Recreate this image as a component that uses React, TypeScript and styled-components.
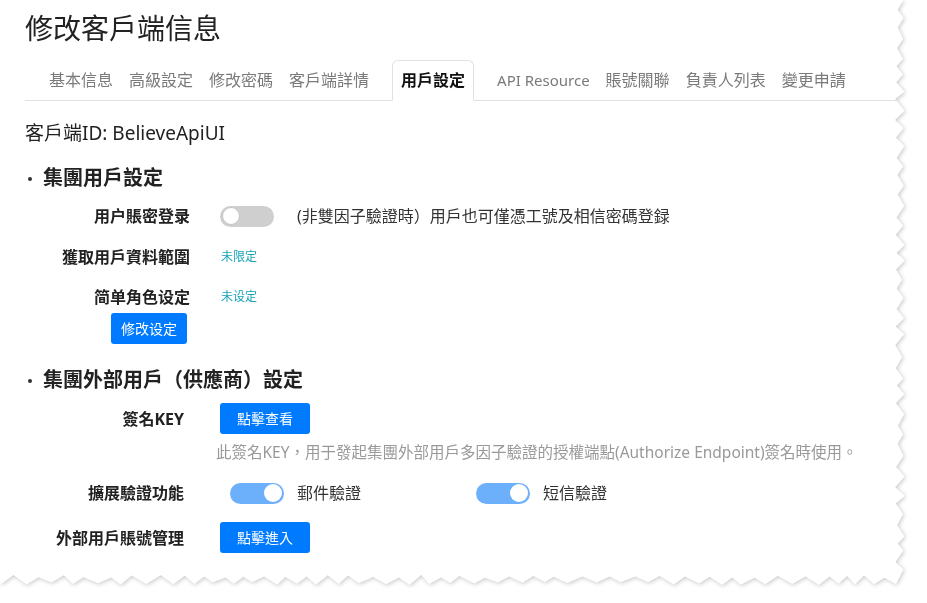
import { FunctionComponent } from "react";
import styled, { createGlobalStyle, css } from "styled-components";

const PAPER_W = 906;
const PAPER_H = 586;

// torn paper edge along the right and bottom sides
const buildTear = () => {
  let seed = 7;
  const rnd = () => {
    seed = (seed * 9301 + 49297) % 233280;
    return seed / 233280;
  };
  const pts: string[] = ["0px 0px"];
  for (let y = 0, i = 0; y < PAPER_H - 10; y += 7 + rnd() * 5, i++) {
    const x = i % 2 ? PAPER_W - 8 - rnd() * 3 : PAPER_W - 1 - rnd() * 3;
    pts.push(`${x.toFixed(1)}px ${y.toFixed(1)}px`);
  }
  for (let x = PAPER_W - 10, i = 0; x > 0; x -= 8 + rnd() * 7, i++) {
    const y = i % 2 ? PAPER_H - 8 - rnd() * 3 : PAPER_H - 1 - rnd() * 3;
    pts.push(`${x.toFixed(1)}px ${y.toFixed(1)}px`);
  }
  pts.push(`0px ${PAPER_H - 4}px`);
  return `polygon(${pts.join(", ")})`;
};

const TEAR = buildTear();

const GlobalStyle = createGlobalStyle`
  body {
    margin: 0;
    background: #ffffff;
    font-family: "Noto Sans", "Noto Sans CJK TC", sans-serif;
    color: #222;
  }
`;

const Page = styled.div`
  width: 927px;
  height: 603px;
  background: #ffffff;
  overflow: hidden;
`;
const Sheet = styled.div`
  width: ${PAPER_W}px;
  filter: drop-shadow(1px 1px 2px rgba(0, 0, 0, 0.22));
`;
const Paper = styled.div`
  width: ${PAPER_W}px;
  height: ${PAPER_H}px;
  background: #ffffff;
  clip-path: ${TEAR};
  padding: 10px 0 0 25px;
  box-sizing: border-box;
  display: flex;
  flex-direction: column;
  align-items: flex-start;
`;
const Title = styled.h1`
  margin: 0;
  font-size: 28px;
  line-height: 36px;
  font-weight: 400;
  color: #222;
`;
const TabBar = styled.nav`
  align-self: stretch;
  margin-top: 14px;
  height: 40px;
  display: flex;
  align-items: flex-end;
  padding-left: 16px;
  border-bottom: 1px solid #dee2e6;
`;
const Tab = styled.div<{ $active?: boolean; $latin?: boolean }>`
  height: 40px;
  line-height: 40px;
  padding: 0 8px;
  font-size: ${({ $latin }) => ($latin ? "15px" : "16px")};
  color: #7a7a7a;
  white-space: nowrap;
  ${({ $active }) =>
    $active &&
    css`
      height: 41px;
      box-sizing: border-box;
      margin: 0 15px -1px;
      line-height: 39px;
      border: 1px solid #dee2e6;
      border-bottom-color: #ffffff;
      border-radius: 6px 6px 0 0;
      background: #ffffff;
      color: #111;
      font-weight: 600;
    `}
`;
const ClientId = styled.div`
  margin-top: 20px;
  font-size: 19px;
  line-height: 24px;
  color: #222;
`;
const Heading = styled.h2<{ $top: number }>`
  margin: ${({ $top }) => $top}px 0 0;
  display: flex;
  align-items: center;
  font-size: 20px;
  line-height: 24px;
  font-weight: 700;
  color: #222;
`;
const Bullet = styled.span`
  width: 4px;
  height: 4px;
  border-radius: 50%;
  background: #333;
  margin: 2px 11px 0 3px;
`;
const Row = styled.div<{ $top: number; $labelWidth: number; $gap: number }>`
  margin-top: ${({ $top }) => $top}px;
  min-height: 24px;
  display: flex;
  align-items: center;
  gap: ${({ $gap }) => $gap}px;

  & > label {
    width: ${({ $labelWidth }) => $labelWidth}px;
  }
`;
const Label = styled.label`
  flex-shrink: 0;
  text-align: right;
  font-size: 16px;
  line-height: 24px;
  font-weight: 700;
  color: #222;
`;
const Text = styled.span`
  font-size: 16px;
  line-height: 24px;
  color: #333;
  white-space: nowrap;
`;
const Hint = styled.span`
  font-size: 12px;
  line-height: 24px;
  color: #17a2b8;
`;
const Button = styled.button<{ $pad: number; $top?: number; $left?: number }>`
  margin: ${({ $top = 0 }) => $top}px 0 0 ${({ $left = 0 }) => $left}px;
  height: 31px;
  padding: 0 ${({ $pad }) => $pad}px;
  border: none;
  border-radius: 3px;
  background: #007bff;
  color: #ffffff;
  font-family: inherit;
  font-size: 14px;
  line-height: 31px;
  cursor: pointer;
`;
const HelpText = styled.div`
  margin: 8px 0 0 191px;
  font-size: 15.5px;
  line-height: 20px;
  color: #999;
  white-space: nowrap;
`;
const Switch = styled.span<{ $on?: boolean }>`
  position: relative;
  display: inline-block;
  flex-shrink: 0;
  width: 54px;
  height: 21px;
  border-radius: 11px;
  background: ${({ $on }) => ($on ? "#6cb0fc" : "#cfcfcf")};

  &::after {
    content: "";
    position: absolute;
    top: 1.5px;
    left: ${({ $on }) => ($on ? "34px" : "2px")};
    width: 18px;
    height: 18px;
    box-sizing: border-box;
    border-radius: 50%;
    background: #ffffff;
    border: ${({ $on }) => ($on ? "none" : "1px solid #c4c4c4")};
  }
`;
const SwitchGroup = styled.div<{ $width?: number; $gap?: number }>`
  display: flex;
  align-items: center;
  gap: ${({ $gap = 13 }) => $gap}px;
  width: ${({ $width }) => ($width ? `${$width}px` : "auto")};
`;
const SwitchList = styled.div`
  display: flex;
  align-items: center;
  margin-left: 10px;
`;

const App: FunctionComponent = () => {
  const tabs = ["基本信息", "高級設定", "修改密碼", "客戶端詳情", "用戶設定", "API Resource", "賬號關聯", "負責人列表", "變更申請"];
  return (
    <Page>
      <GlobalStyle />
      <Sheet>
        <Paper>
          <Title>修改客戶端信息</Title>
          <TabBar>
            {tabs.map((t) => (
              <Tab key={t} $active={t === "用戶設定"} $latin={t === "API Resource"}>
                {t}
              </Tab>
            ))}
          </TabBar>
          <ClientId>客戶端ID: BelieveApiUI</ClientId>

          <Heading $top={21}>
            <Bullet />
            集團用戶設定
          </Heading>
          <Row $top={14} $labelWidth={165} $gap={30}>
            <Label>用户賬密登录</Label>
            <SwitchGroup $gap={23}>
              <Switch />
              <Text>(非雙因子驗證時）用戶也可僅憑工號及相信密碼登録</Text>
            </SwitchGroup>
          </Row>
          <Row $top={17} $labelWidth={165} $gap={31}>
            <Label>獲取用戶資料範圍</Label>
            <Hint>未限定</Hint>
          </Row>
          <Row $top={16} $labelWidth={165} $gap={31}>
            <Label>简单角色设定</Label>
            <Hint>未设定</Hint>
          </Row>
          <Button $pad={10} $top={4} $left={86}>
            修改设定
          </Button>

          <Heading $top={24}>
            <Bullet />
            集團外部用戶（供應商）設定
          </Heading>
          <Row $top={11} $labelWidth={159} $gap={36}>
            <Label>簽名KEY</Label>
            <Button $pad={17}>點擊查看</Button>
          </Row>
          <HelpText>此簽名KEY，用于發起集團外部用戶多因子驗證的授權端點(Authorize Endpoint)簽名時使用。</HelpText>
          <Row $top={19} $labelWidth={159} $gap={36}>
            <Label>擴展驗證功能</Label>
            <SwitchList>
              <SwitchGroup $width={246}>
                <Switch $on />
                <Text>郵件驗證</Text>
              </SwitchGroup>
              <SwitchGroup>
                <Switch $on />
                <Text>短信驗證</Text>
              </SwitchGroup>
            </SwitchList>
          </Row>
          <Row $top={17} $labelWidth={159} $gap={36}>
            <Label>外部用戶賬號管理</Label>
            <Button $pad={17}>點擊進入</Button>
          </Row>
        </Paper>
      </Sheet>
    </Page>
  );
};

export default App;
